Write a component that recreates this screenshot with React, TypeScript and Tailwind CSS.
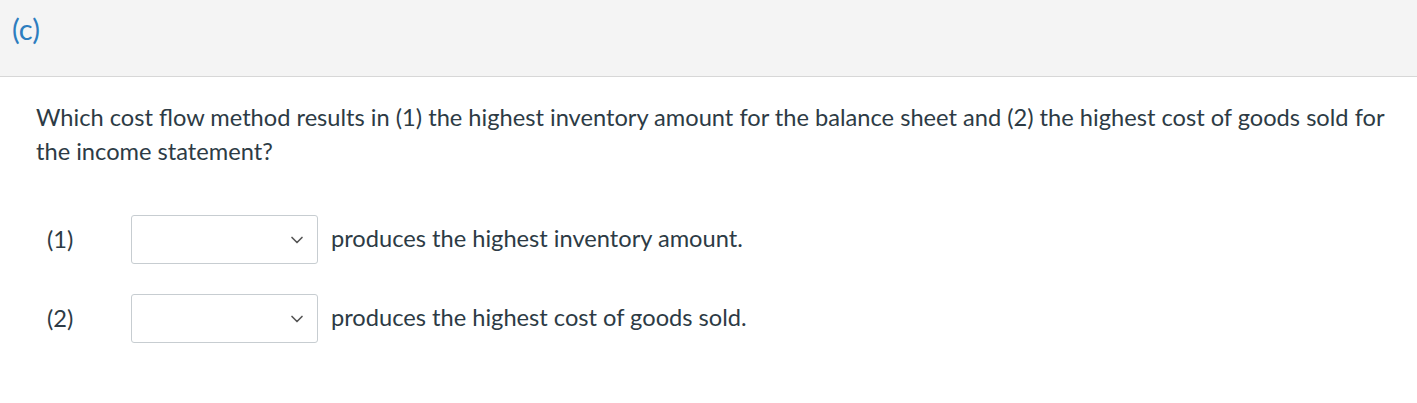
import { ChevronDown } from "lucide-react"

const rows = [
  { label: "(1)", text: "produces the highest inventory amount." },
  { label: "(2)", text: "produces the highest cost of goods sold." },
]

export default function App() {
  return (
    <div className="w-[1417px] h-[403px] bg-white text-[#2d3b45]" style={{ fontFamily: "Lato, 'Noto Sans', sans-serif" }}>
      <div className="h-[77px] bg-[#f4f4f4] border-b border-[#d7d7d7] px-[12px] pt-[9px]">
        <span className="text-[29px] leading-[40px] text-[#2d7dbf]">(c)</span>
      </div>

      <div className="pl-[36px] pr-[30px] pt-[23px]">
        <p className="text-[23.65px] leading-[34px]">
          Which cost flow method results in (1) the highest inventory amount for the balance sheet and (2) the highest
          cost of goods sold for the income statement?
        </p>

        <div className="mt-[47px] flex flex-col gap-[30px]">
          {rows.map((r) => (
            <div key={r.label} className="flex items-center text-[23.65px]">
              <span className="w-[95px] pl-[11px]">{r.label}</span>
              <div className="w-[187px] h-[49px] border border-[#c7cdd1] rounded-[3px] bg-white flex items-center justify-end pr-[10px]">
                <ChevronDown className="w-[20px] h-[20px] text-[#555]" strokeWidth={2} />
              </div>
              <span className="ml-[13px] -translate-y-[1px]">{r.text}</span>
            </div>
          ))}
        </div>
      </div>
    </div>
  )
}
